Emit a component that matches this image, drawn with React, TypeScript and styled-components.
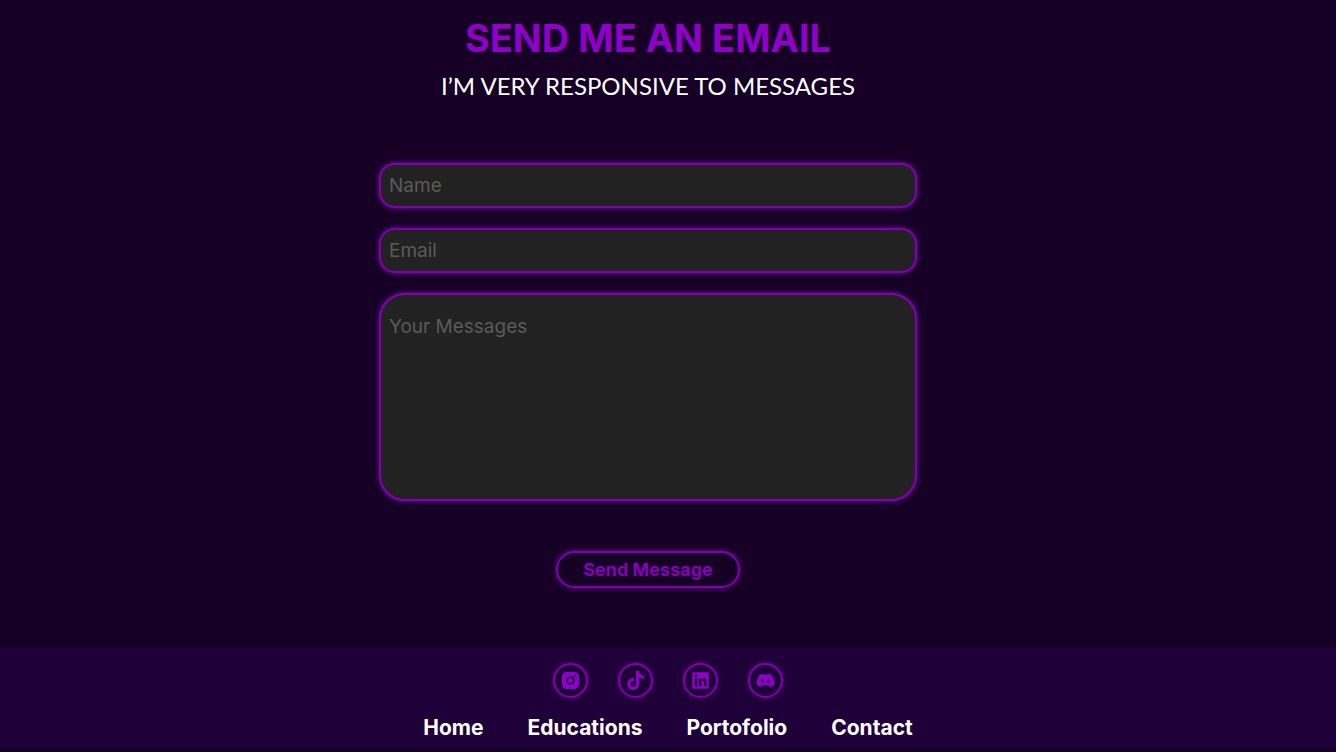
import React from "react";
import styled, { createGlobalStyle } from "styled-components";
import { FaTiktok, FaLinkedin, FaDiscord } from "react-icons/fa6";

const GlobalStyle = createGlobalStyle`
  *, *::before, *::after { box-sizing: border-box; }
  body {
    margin: 0;
    background: #160025;
    color: #fff;
    font-family: Inter, "Liberation Sans", sans-serif;
  }
`;

const Section = styled.main`
  display: flex;
  flex-direction: column;
  align-items: center;
  padding: 8px 40px 60px 0;
`;

const Title = styled.h1`
  margin: 0;
  color: #8f00c8;
  font-size: 38px;
  line-height: 60px;
  font-weight: 700;
`;

const Subtitle = styled.p`
  margin: 0;
  font-family: Lato, Inter, sans-serif;
  font-size: 24px;
  line-height: 36px;
`;

const Form = styled.form`
  display: flex;
  flex-direction: column;
  gap: 20px;
  width: 100%;
  max-width: 538px;
  margin-top: 59px;
`;

const Field = styled.input`
  width: 100%;
  height: 45px;
  padding: 0 8px;
  border: 2px solid #8000b0;
  border-radius: 16px;
  background: #222;
  box-shadow: 0 0 5px #8000b0;
  color: #fff;
  font-family: inherit;
  font-size: 19px;
  line-height: 28px;
  outline: none;

  &::placeholder { color: #5a5a5a; opacity: 1; }
`;

const MessageField = styled(Field)`
  display: block;
  height: 208px;
  padding: 18px 8px;
  border-radius: 26px;
  resize: none;
`;

const SendButton = styled.button`
  align-self: center;
  width: 184px;
  height: 37px;
  margin-top: 30px;
  padding: 0;
  border: 2px solid #8000b0;
  border-radius: 20px;
  background: transparent;
  box-shadow: 0 0 5px #8000b0;
  color: #8600bb;
  font-family: inherit;
  font-size: 18px;
  font-weight: 700;
`;

const Footer = styled.footer`
  display: flex;
  flex-direction: column;
  align-items: center;
  gap: 15px;
  padding: 15px 0 5px;
  background: #200038;
`;

const Socials = styled.div`
  display: flex;
  gap: 30px;
`;

const SocialLink = styled.a`
  display: grid;
  place-items: center;
  width: 35px;
  height: 35px;
  border: 2px solid #8000b0;
  border-radius: 50%;
  box-shadow: 0 0 4px #5c0084;
  color: #8f00c8;
`;

const Nav = styled.nav`
  display: flex;
  gap: 44px;
`;

const NavLink = styled.a`
  color: #fff;
  font-size: 21px;
  line-height: 30px;
  font-weight: 700;
  text-decoration: none;
`;

const InstagramIcon = () => (
  <svg width="17" height="17" viewBox="0 0 17 17" fill="currentColor" aria-hidden="true">
    <path
      fillRule="evenodd"
      d="M4.5 0h8A4.5 4.5 0 0 1 17 4.5v8a4.5 4.5 0 0 1-4.5 4.5h-8A4.5 4.5 0 0 1 0 12.5v-8A4.5 4.5 0 0 1 4.5 0ZM8.5 4.2a4.3 4.3 0 1 0 0 8.6a4.3 4.3 0 0 0 0-8.6ZM13.2 2.8a1.1 1.1 0 1 0 0 2.2a1.1 1.1 0 0 0 0-2.2Z"
    />
    <circle cx="8.5" cy="8.5" r="2.5" />
  </svg>
);

const socials = [
  { label: "Instagram", icon: <InstagramIcon /> },
  { label: "TikTok", icon: <FaTiktok size={19} /> },
  { label: "LinkedIn", icon: <FaLinkedin size={19} /> },
  { label: "Discord", icon: <FaDiscord size={19} /> },
];

const pages = ["Home", "Educations", "Portofolio", "Contact"];

export default function App() {
  return (
    <>
      <GlobalStyle />
      <Section id="contact">
        <Title>SEND ME AN EMAIL</Title>
        <Subtitle>I’M VERY RESPONSIVE TO MESSAGES</Subtitle>
        <Form onSubmit={(e) => e.preventDefault()}>
          <Field type="text" placeholder="Name" aria-label="Name" />
          <Field type="email" placeholder="Email" aria-label="Email" />
          <MessageField as="textarea" placeholder="Your Messages" aria-label="Your Messages" />
          <SendButton type="submit">Send Message</SendButton>
        </Form>
      </Section>
      <Footer>
        <Socials>
          {socials.map((s) => (
            <SocialLink key={s.label} href="#" aria-label={s.label}>{s.icon}</SocialLink>
          ))}
        </Socials>
        <Nav>
          {pages.map((p) => (
            <NavLink key={p} href={`#${p.toLowerCase()}`}>{p}</NavLink>
          ))}
        </Nav>
      </Footer>
    </>
  );
}
